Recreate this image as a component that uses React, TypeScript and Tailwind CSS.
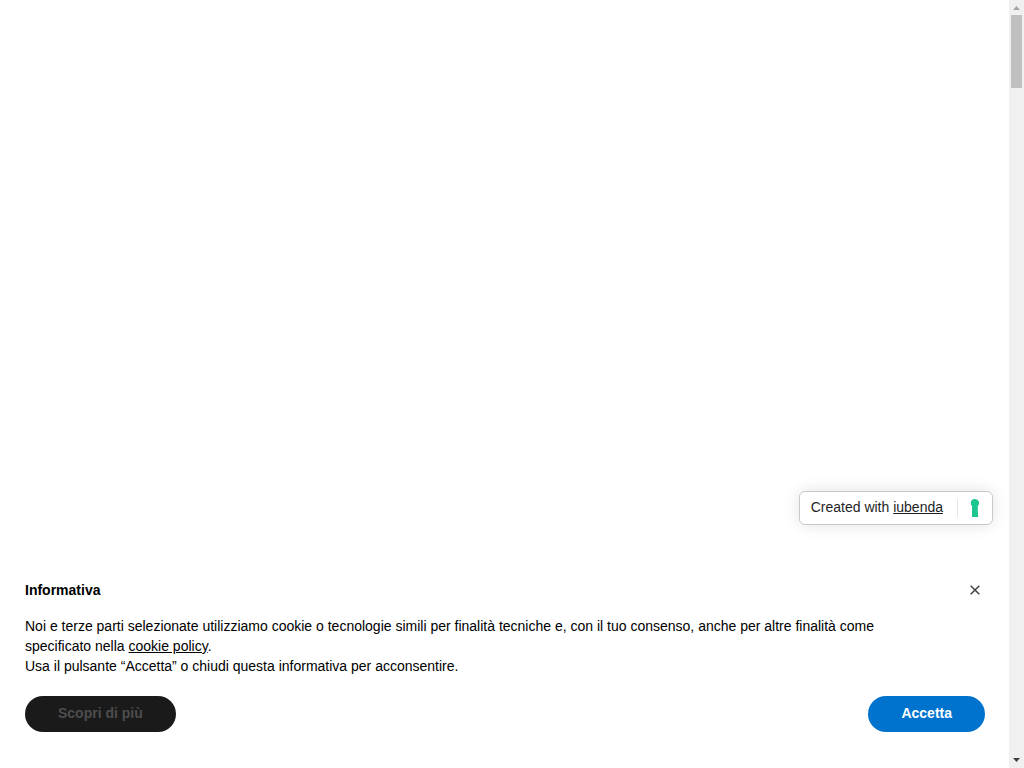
const Scrollbar = () => {
  return (
    <div
      aria-hidden="true"
      className="flex w-[15px] shrink-0 flex-col items-center bg-[#f0f0f0]"
    >
      <svg width="15" height="15" viewBox="0 0 15 15" fill="#a3a3a3">
        <path d="M4 10L7.5 6L11 10Z" />
      </svg>
      <div className="h-[73px] w-[11px] bg-[#c0c0c0]" />
      <div className="flex-1" />
      <svg width="15" height="15" viewBox="0 0 15 15" fill="#404040">
        <path d="M4 5L7.5 9L11 5Z" />
      </svg>
    </div>
  );
};

const IubendaBadge = () => {
  return (
    <div className="mr-4 mb-[15px] flex h-[34px] items-center self-end rounded-md border border-[#c8c8c8] bg-white pr-[13px] pl-[11px] text-sm text-[#1f1f1f] shadow-[0_0_16px_rgba(0,0,0,0.12)]">
      <span className="pb-0.5">
        Created with{" "}
        <a href="#iubenda" className="underline">
          iubenda
        </a>
      </span>
      <span className="ml-3.5 h-[18px] w-px bg-[#e3e3e3]" />
      <svg
        className="ml-[13px]"
        width="8"
        height="18"
        viewBox="0 0 8 18"
        fill="#1cc691"
        aria-hidden="true"
      >
        <path d="M4 0a4 4 0 0 1 2.8 6.9V12L7.2 18H1V7A4 4 0 0 1 4 0Z" />
      </svg>
    </div>
  );
};

const CookieBanner = () => {
  return (
    <section
      aria-labelledby="cookie-title"
      className="bg-white pt-10 pr-6 pb-9 pl-[25px] text-sm leading-5 text-black"
    >
      <div className="flex items-center justify-between">
        <h2 id="cookie-title" className="font-bold">
          Informativa
        </h2>
        <button
          type="button"
          aria-label="Chiudi questa informativa"
          className="flex h-5 w-5 items-center justify-center"
        >
          <svg
            width="10"
            height="10"
            viewBox="0 0 10 10"
            fill="none"
            stroke="#404040"
            strokeWidth="1.5"
          >
            <path d="M0.7 0.7L9.3 9.3M9.3 0.7L0.7 9.3" />
          </svg>
        </button>
      </div>

      <p className="mt-4 pr-16">
        Noi e terze parti selezionate utilizziamo cookie o tecnologie simili per
        finalità tecniche e, con il tuo consenso, anche per altre finalità come
        specificato nella{" "}
        <a href="#cookie-policy" className="underline">
          cookie policy
        </a>
        .
        <br />
        Usa il pulsante “Accetta” o chiudi questa informativa per acconsentire.
      </p>

      <div className="mt-5 flex justify-between">
        <button
          type="button"
          className="h-9 rounded-full bg-[#1a1a1a] px-[33px] pb-0.5 font-bold text-[#4d4d4d]"
        >
          Scopri di più
        </button>
        <button
          type="button"
          className="h-9 rounded-full bg-[#0073ce] px-[33px] pb-0.5 font-bold text-white"
        >
          Accetta
        </button>
      </div>
    </section>
  );
};

const App = () => {
  return (
    <div className="flex min-h-screen bg-white font-['Liberation_Sans',Arial,sans-serif]">
      <main className="flex min-w-0 flex-1 flex-col justify-end">
        <IubendaBadge />
        <CookieBanner />
      </main>
      <Scrollbar />
    </div>
  );
};

export default App;
